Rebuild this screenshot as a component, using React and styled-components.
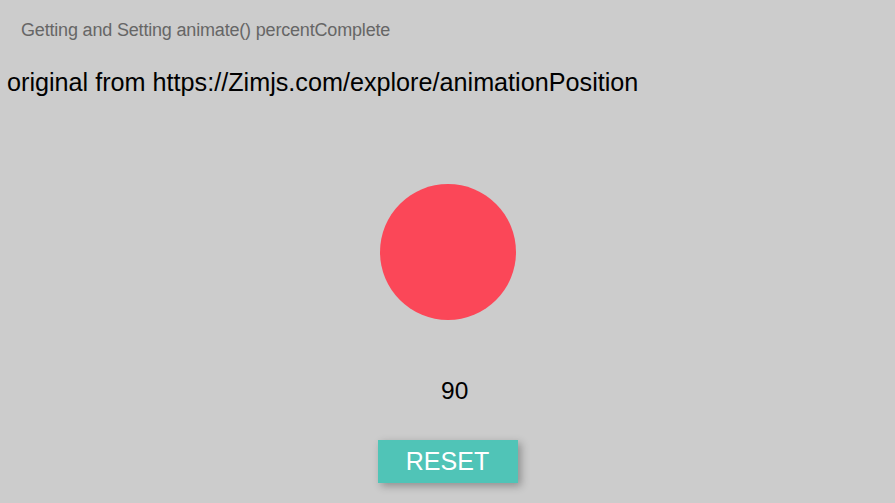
import React from 'react';
import styled, { createGlobalStyle } from 'styled-components';

const GlobalStyle = createGlobalStyle`
    html, body {
        margin: 0;
        padding: 0;
        background: #cccccc;
        overflow: hidden;
    }
    body {
        font-family: "Liberation Sans", Arial, sans-serif;
    }
`;

const Page = styled.div`
    width: 895px;
    height: 503px;
    display: flex;
    flex-direction: column;
    background: #cccccc;
`;

const Title = styled.div`
    padding: 20.5px 0 0 21px;
    font-size: 18px;
    letter-spacing: -0.18px;
    line-height: 18px;
    color: #666666;
`;

const Credit = styled.div`
    margin-top: 29px;
    padding-left: 7px;
    font-size: 25.2px;
    line-height: 28px;
    color: #000000;
`;

const Stage = styled.div`
    display: flex;
    flex-direction: column;
    align-items: center;
`;

const Ball = styled.div`
    margin-top: 88.5px;
    width: 136px;
    height: 136px;
    border-radius: 50%;
    background: #fb4758;
`;

const Count = styled.div`
    align-self: flex-start;
    margin: 57px 0 0 441px;
    font-size: 24.5px;
    line-height: 28px;
    color: #000000;
`;

const ResetButton = styled.button`
    margin-top: 35px;
    width: 140px;
    height: 43px;
    border: none;
    padding: 0;
    background: #50c4b7;
    color: #ffffff;
    font-family: "Liberation Sans", Arial, sans-serif;
    font-size: 25px;
    box-shadow: 3px 3px 8px rgba(0, 0, 0, 0.3);
    cursor: pointer;
`;

export default function App() {
    return (
        <>
            <GlobalStyle />
            <Page>
                <Title>Getting and Setting animate() percentComplete</Title>
                <Credit>original from https://Zimjs.com/explore/animationPosition</Credit>
                <Stage>
                    <Ball />
                    <Count>90</Count>
                    <ResetButton>RESET</ResetButton>
                </Stage>
            </Page>
        </>
    );
}
